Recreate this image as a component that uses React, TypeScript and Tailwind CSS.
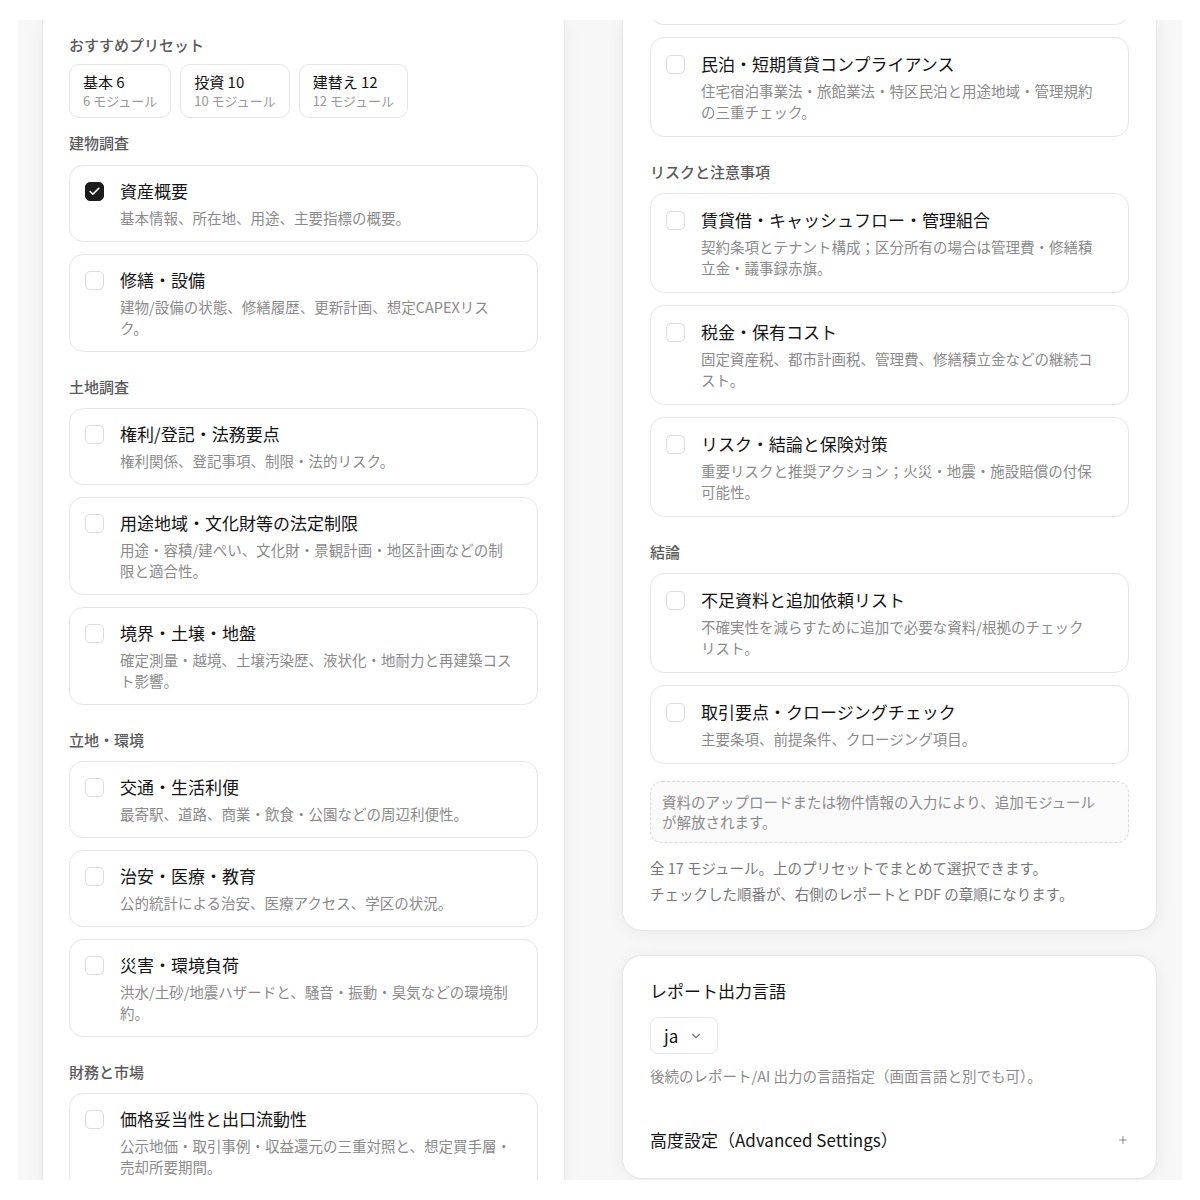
import React from 'react';
import { Check, ChevronDown, Plus } from 'lucide-react';

type Module = { title: string; desc: string; checked?: boolean };
type Section = { label: string; items: Module[] };

const leftSections: Section[] = [
  {
    label: '建物調査',
    items: [
      { title: '資産概要', desc: '基本情報、所在地、用途、主要指標の概要。', checked: true },
      { title: '修繕・設備', desc: '建物/設備の状態、修繕履歴、更新計画、想定CAPEXリス\nク。' },
    ],
  },
  {
    label: '土地調査',
    items: [
      { title: '権利/登記・法務要点', desc: '権利関係、登記事項、制限・法的リスク。' },
      { title: '用途地域・文化財等の法定制限', desc: '用途・容積/建ぺい、文化財・景観計画・地区計画などの制\n限と適合性。' },
      { title: '境界・土壌・地盤', desc: '確定測量・越境、土壌汚染歴、液状化・地耐力と再建築コス\nト影響。' },
    ],
  },
  {
    label: '立地・環境',
    items: [
      { title: '交通・生活利便', desc: '最寄駅、道路、商業・飲食・公園などの周辺利便性。' },
      { title: '治安・医療・教育', desc: '公的統計による治安、医療アクセス、学区の状況。' },
      { title: '災害・環境負荷', desc: '洪水/土砂/地震ハザードと、騒音・振動・臭気などの環境制\n約。' },
    ],
  },
  {
    label: '財務と市場',
    items: [
      { title: '価格妥当性と出口流動性', desc: '公示地価・取引事例・収益還元の三重対照と、想定買手層・\n売却所要期間。' },
    ],
  },
];

const rightSections: Section[] = [
  {
    label: 'リスクと注意事項',
    items: [
      { title: '賃貸借・キャッシュフロー・管理組合', desc: '契約条項とテナント構成；区分所有の場合は管理費・修繕積\n立金・議事録赤旗。' },
      { title: '税金・保有コスト', desc: '固定資産税、都市計画税、管理費、修繕積立金などの継続コ\nスト。' },
      { title: 'リスク・結論と保険対策', desc: '重要リスクと推奨アクション；火災・地震・施設賠償の付保\n可能性。' },
    ],
  },
  {
    label: '結論',
    items: [
      { title: '不足資料と追加依頼リスト', desc: '不確実性を減らすために追加で必要な資料/根拠のチェック\nリスト。' },
      { title: '取引要点・クロージングチェック', desc: '主要条項、前提条件、クロージング項目。' },
    ],
  },
];

const presets = [
  { name: '基本 6', count: '6 モジュール' },
  { name: '投資 10', count: '10 モジュール' },
  { name: '建替え 12', count: '12 モジュール' },
];

const ModuleCard = ({ m, roomy }: { m: Module; roomy?: boolean }) => (
  <label
    className={`flex gap-4 rounded-[14px] border border-[#e6e6e6] bg-white pl-[15px] pr-[15px] ${
      roomy ? 'py-[14px]' : 'py-[13px]'
    }`}
  >
    <span
      className={`mt-[2.5px] flex h-[19px] w-[19px] shrink-0 items-center justify-center rounded-[5px] border ${
        m.checked ? 'border-[#1c1c1c] bg-[#1c1c1c]' : 'border-[#dcdcdc] bg-white'
      }`}
    >
      {m.checked && <Check size={13} strokeWidth={3} className="text-white" />}
    </span>
    <span className="flex flex-col gap-1">
      <span className="text-[17px] leading-6 text-[#141414]">{m.title}</span>
      <span className="whitespace-pre-line text-[14.5px] leading-[21px] text-[#8a8a8a]">{m.desc}</span>
    </span>
  </label>
);

const SectionBlock = ({ s, first, roomy }: { s: Section; first?: boolean; roomy?: boolean }) => (
  <div className="flex flex-col">
    <h3
      className={`${first ? 'mt-[14px] mb-[11px]' : 'mt-6 mb-[10px]'} text-[15px] font-medium leading-[22px] text-[#5a5a5a]`}
    >
      {s.label}
    </h3>
    <div className="flex flex-col gap-3">
      {s.items.map((m) => (
        <ModuleCard key={m.title} m={m} roomy={roomy} />
      ))}
    </div>
  </div>
);

export default function App() {
  return (
    <div className="h-[1200px] bg-white py-5 font-['Noto_Sans_CJK_JP','Noto_Sans',sans-serif]">
      <div className="mx-[18px] flex h-[1160px] items-start gap-[57px] overflow-hidden bg-[#f7f7f7] pl-6">
        {/* Left: module picker (scrolled) */}
        <div className="flex min-h-full w-[523px] shrink-0 flex-col border-x border-[#e6e6e6] bg-white px-[26px] shadow-[0_2px_16px_rgba(0,0,0,0.05)]">
          <div className="-mt-[10px] ml-auto mr-[5px] h-[10px] w-[120px] rounded-b-lg border-x border-b border-[#dcd7fb]" />
          <h3 className="mt-[14px] mb-2 text-[15px] font-medium leading-[22px] text-[#5a5a5a]">おすすめプリセット</h3>
          <div className="flex gap-[9px]">
            {presets.map((p) => (
              <button
                key={p.name}
                className="flex flex-col items-start rounded-[10px] border border-[#e6e6e6] bg-white px-[13px] py-[7px] text-left"
              >
                <span className="text-[15px] leading-5 text-[#141414]">{p.name}</span>
                <span className="text-[13px] leading-[18px] text-[#999]">{p.count}</span>
              </button>
            ))}
          </div>
          {leftSections.map((s, i) => (
            <SectionBlock key={s.label} s={s} first={i === 0} />
          ))}
        </div>

        {/* Right column */}
        <div className="flex w-[535px] shrink-0 flex-col gap-6">
          <div className="flex flex-col rounded-b-[20px] border-x border-b border-[#e6e6e6] bg-white px-[27px] pb-[23px] shadow-[0_2px_16px_rgba(0,0,0,0.06)]">
            <div className="-mt-[10px] h-[15px] rounded-b-[14px] border-x border-b border-[#e6e6e6]" />
            <div className="mt-3">
              <ModuleCard
                roomy
                m={{
                  title: '民泊・短期賃貸コンプライアンス',
                  desc: '住宅宿泊事業法・旅館業法・特区民泊と用途地域・管理規約\nの三重チェック。',
                }}
              />
            </div>
            {rightSections.map((s) => (
              <SectionBlock key={s.label} s={s} roomy />
            ))}
            <div className="mt-[17px] whitespace-pre-line rounded-xl border border-dashed border-[#d9d9d9] bg-[#fafafa] px-[11px] py-[10px] text-[14.5px] leading-5 text-[#8a8a8a]">
              {'資料のアップロードまたは物件情報の入力により、追加モジュール\nが解放されます。'}
            </div>
            <p className="mt-3 text-[14.5px] leading-[26px] text-[#777]">
              全 17 モジュール。上のプリセットでまとめて選択できます。
              <br />
              チェックした順番が、右側のレポートと PDF の章順になります。
            </p>
          </div>

          <div className="flex flex-col rounded-[20px] border border-[#e6e6e6] bg-white px-[27px] pt-[23px] pb-[26px] shadow-[0_2px_16px_rgba(0,0,0,0.06)]">
            <h3 className="text-[17px] leading-6 text-[#141414]">レポート出力言語</h3>
            <button className="mt-[14px] flex h-[37px] w-[68px] items-center gap-[11px] rounded-lg border border-[#e6e6e6] bg-white pl-[13px]">
              <span className="text-[17px] leading-6 text-[#141414]">ja</span>
              <ChevronDown size={14} strokeWidth={2} className="text-[#777]" />
            </button>
            <p className="mt-[11px] text-[14.5px] leading-[21px] text-[#8a8a8a]">
              後続のレポート/AI 出力の言語指定（画面言語と別でも可）。
            </p>
            <div className="mt-[42px] flex items-center justify-between">
              <span className="text-[17px] leading-6 text-[#141414]">高度設定（Advanced Settings）</span>
              <Plus size={12} strokeWidth={1.5} className="text-[#666]" />
            </div>
          </div>
        </div>
      </div>
    </div>
  );
}
